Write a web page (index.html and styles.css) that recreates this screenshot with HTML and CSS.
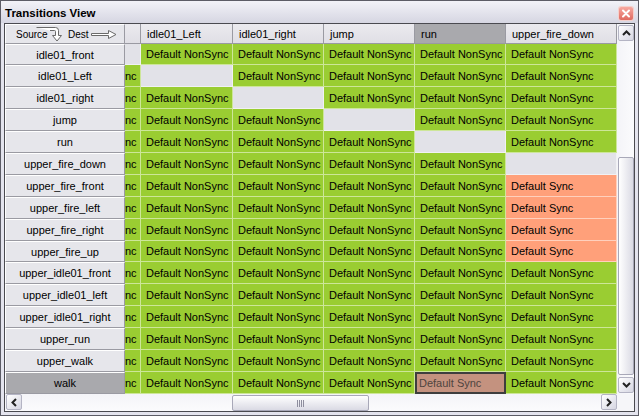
FILE: index.html
```html
<!DOCTYPE html>
<html>
<head>
<meta charset="utf-8">
<link rel="stylesheet" href="styles.css">
</head>
<body>
<div class="window">
  <div class="titlebar">
    <span class="title">Transitions View</span>
    <span class="close"><svg width="14" height="13" viewBox="0 0 14 13"><path d="M4 3.5 L10 9.5 M10 3.5 L4 9.5" stroke="#fff" stroke-width="2" stroke-linecap="round"/></svg></span>
  </div>
  <div class="frame">
    <div class="grid">
      <div class="corner">
        <span class="src">Source</span>
        <svg class="hook" width="27" height="16" viewBox="0 0 27 16"><path d="M0.5 1.5 H19.5 Q22.5 1.5 22.5 4.5 V9.5 H25.5 L21 15 L16.5 9.5 H19.5 V5.5 Q19.5 4.5 18.5 4.5 H14" fill="#fff" stroke="#6a6a6a" stroke-width="1"/></svg>
        <span class="dst">Dest</span>
        <svg class="rarrow" width="26" height="9" viewBox="0 0 26 9"><path d="M0.5 3.5 H17.5 V0.5 L25 4.5 L17.5 8.5 V5.5 H0.5 Z" fill="#fff" stroke="#6a6a6a" stroke-width="1"/></svg>
      </div>
      <div class="ch"></div>
      <div class="ch">idle01_Left</div>
      <div class="ch">idle01_right</div>
      <div class="ch">jump</div>
      <div class="ch sel">run</div>
      <div class="ch">upper_fire_down</div>

      <div class="rh">idle01_front</div>
      <div class="c e p"></div>
      <div class="c n">Default NonSync</div><div class="c n">Default NonSync</div><div class="c n">Default NonSync</div><div class="c n">Default NonSync</div><div class="c n">Default NonSync</div>

      <div class="rh">idle01_Left</div>
      <div class="c n p"><span>Default NonSync</span></div>
      <div class="c e"></div><div class="c n">Default NonSync</div><div class="c n">Default NonSync</div><div class="c n">Default NonSync</div><div class="c n">Default NonSync</div>

      <div class="rh">idle01_right</div>
      <div class="c n p"><span>Default NonSync</span></div>
      <div class="c n">Default NonSync</div><div class="c e"></div><div class="c n">Default NonSync</div><div class="c n">Default NonSync</div><div class="c n">Default NonSync</div>

      <div class="rh">jump</div>
      <div class="c n p"><span>Default NonSync</span></div>
      <div class="c n">Default NonSync</div><div class="c n">Default NonSync</div><div class="c e"></div><div class="c n">Default NonSync</div><div class="c n">Default NonSync</div>

      <div class="rh">run</div>
      <div class="c n p"><span>Default NonSync</span></div>
      <div class="c n">Default NonSync</div><div class="c n">Default NonSync</div><div class="c n">Default NonSync</div><div class="c e"></div><div class="c n">Default NonSync</div>

      <div class="rh">upper_fire_down</div>
      <div class="c n p"><span>Default NonSync</span></div>
      <div class="c n">Default NonSync</div><div class="c n">Default NonSync</div><div class="c n">Default NonSync</div><div class="c n">Default NonSync</div><div class="c e"></div>

      <div class="rh">upper_fire_front</div>
      <div class="c n p"><span>Default NonSync</span></div>
      <div class="c n">Default NonSync</div><div class="c n">Default NonSync</div><div class="c n">Default NonSync</div><div class="c n">Default NonSync</div><div class="c s">Default Sync</div>

      <div class="rh">upper_fire_left</div>
      <div class="c n p"><span>Default NonSync</span></div>
      <div class="c n">Default NonSync</div><div class="c n">Default NonSync</div><div class="c n">Default NonSync</div><div class="c n">Default NonSync</div><div class="c s">Default Sync</div>

      <div class="rh">upper_fire_right</div>
      <div class="c n p"><span>Default NonSync</span></div>
      <div class="c n">Default NonSync</div><div class="c n">Default NonSync</div><div class="c n">Default NonSync</div><div class="c n">Default NonSync</div><div class="c s">Default Sync</div>

      <div class="rh">upper_fire_up</div>
      <div class="c n p"><span>Default NonSync</span></div>
      <div class="c n">Default NonSync</div><div class="c n">Default NonSync</div><div class="c n">Default NonSync</div><div class="c n">Default NonSync</div><div class="c s">Default Sync</div>

      <div class="rh">upper_idle01_front</div>
      <div class="c n p"><span>Default NonSync</span></div>
      <div class="c n">Default NonSync</div><div class="c n">Default NonSync</div><div class="c n">Default NonSync</div><div class="c n">Default NonSync</div><div class="c n">Default NonSync</div>

      <div class="rh">upper_idle01_left</div>
      <div class="c n p"><span>Default NonSync</span></div>
      <div class="c n">Default NonSync</div><div class="c n">Default NonSync</div><div class="c n">Default NonSync</div><div class="c n">Default NonSync</div><div class="c n">Default NonSync</div>

      <div class="rh">upper_idle01_right</div>
      <div class="c n p"><span>Default NonSync</span></div>
      <div class="c n">Default NonSync</div><div class="c n">Default NonSync</div><div class="c n">Default NonSync</div><div class="c n">Default NonSync</div><div class="c n">Default NonSync</div>

      <div class="rh">upper_run</div>
      <div class="c n p"><span>Default NonSync</span></div>
      <div class="c n">Default NonSync</div><div class="c n">Default NonSync</div><div class="c n">Default NonSync</div><div class="c n">Default NonSync</div><div class="c n">Default NonSync</div>

      <div class="rh">upper_walk</div>
      <div class="c n p"><span>Default NonSync</span></div>
      <div class="c n">Default NonSync</div><div class="c n">Default NonSync</div><div class="c n">Default NonSync</div><div class="c n">Default NonSync</div><div class="c n">Default NonSync</div>

      <div class="rh sel">walk</div>
      <div class="c n p"><span>Default NonSync</span></div>
      <div class="c n">Default NonSync</div><div class="c n">Default NonSync</div><div class="c n">Default NonSync</div><div class="c x">Default Sync</div><div class="c n">Default NonSync</div>
    </div>

    <div class="vscroll">
      <div class="sbtn"><svg width="9" height="6" viewBox="0 0 9 6"><path d="M1 5 L4.5 1.5 L8 5" fill="none" stroke="#222" stroke-width="2"/></svg></div>
      <div class="vthumb"></div>
      <div class="sbtn"><svg width="9" height="6" viewBox="0 0 9 6"><path d="M1 1 L4.5 4.5 L8 1" fill="none" stroke="#222" stroke-width="2"/></svg></div>
    </div>

    <div class="hscroll">
      <div class="sbtn"><svg width="6" height="9" viewBox="0 0 6 9"><path d="M5 1 L1.5 4.5 L5 8" fill="none" stroke="#222" stroke-width="2"/></svg></div>
      <div class="hthumb"><span class="grip"></span></div>
      <div class="sbtn right"><svg width="6" height="9" viewBox="0 0 6 9"><path d="M1 1 L4.5 4.5 L1 8" fill="none" stroke="#222" stroke-width="2"/></svg></div>
    </div>
    <div class="sizebox"></div>
  </div>
</div>
</body>
</html>
```

FILE: styles.css
```css
html, body {
  margin: 0;
  padding: 0;
  background: #ffffff;
}

.window {
  width: 639px;
  height: 416px;
  box-sizing: border-box;
  border: 1px solid #5c5c66;
  background: #e4e4ee;
  padding: 0 3px 3px 3px;
  display: flex;
  flex-direction: column;
  font-family: "Liberation Sans", Arial, sans-serif;
  font-size: 11px;
  color: #000;
}

.titlebar {
  height: 22px;
  margin: 0 -3px;
  padding: 0 5px 0 4px;
  display: flex;
  align-items: center;
  justify-content: space-between;
  background: linear-gradient(#f2f2f8, #d6d6e2);
}

.title {
  font-weight: bold;
  font-size: 11.5px;
  color: #000;
  padding-top: 1px;
}

.close {
  width: 14px;
  height: 13px;
  margin-top: 2px;
  box-sizing: border-box;
  border-radius: 2px;
  background: linear-gradient(#f7a8a0, #e06a60);
  box-shadow: 0 0 0 1px #f4d0cc;
  display: flex;
}

.frame {
  flex: 1;
  border: 1px solid #4a4a50;
  display: grid;
  grid-template-columns: 612px 17px;
  grid-template-rows: 370px 17px;
  background: #ffffff;
}

.grid {
  display: grid;
  grid-template-columns: 120px 16px 92px 91px 91px 91px 111px;
  grid-template-rows: 20px 21px repeat(8, 22px) 21px repeat(6, 22px);
  overflow: hidden;
}

.corner, .rh {
  box-sizing: border-box;
  background: #e6e6eb;
  border-top: 1px solid #ffffff;
  border-left: 1px solid #ffffff;
  border-right: 1px solid #9a9aa2;
  border-bottom: 1px solid #9a9aa2;
  display: flex;
  align-items: center;
}

.rh {
  justify-content: center;
  white-space: nowrap;
}

.rh.sel {
  background: #a9a9ad;
}

.corner {
  padding-left: 10px;
  font-size: 10px;
}

.src {
  width: 34px;
}

.hook {
  margin-left: -14px;
  align-self: flex-start;
  margin-top: 1px;
  flex: none;
}

.dst {
  margin-left: 5px;
}

.rarrow {
  margin-left: 2px;
  flex: none;
}

.ch {
  box-sizing: border-box;
  background: linear-gradient(#ebeaef, #e0dfe5);
  border-right: 1px solid #9a9aa2;
  border-bottom: 1px solid #9a9aa2;
  padding-left: 6px;
  display: flex;
  align-items: center;
  white-space: nowrap;
  overflow: hidden;
}

.ch.sel {
  background: #a9a9ad;
}

.c {
  box-sizing: border-box;
  border-right: 1px solid rgba(255, 255, 255, 0.5);
  border-bottom: 1px solid rgba(255, 255, 255, 0.5);
  padding-left: 5px;
  display: flex;
  align-items: center;
  white-space: nowrap;
  overflow: hidden;
}

.n { background: #9acd32; }
.s { background: #ffa07a; }
.e { background: #e2e2e8; }

.x {
  background: #c4927f;
  border: 2px solid #3e3e3e;
  padding-left: 2px;
  color: #4e4440;
}

.p {
  padding-left: 0;
  justify-content: flex-end;
}

.p span {
  flex: none;
  width: 91px;
  padding-left: 5px;
  box-sizing: border-box;
}

.vscroll {
  background: linear-gradient(to right, #f4f4f8, #fbfbfd);
  display: flex;
  flex-direction: column;
  padding: 1px 0;
  box-sizing: border-box;
}

.hscroll {
  background: linear-gradient(#f4f4f8, #fbfbfd);
  display: flex;
}

.sbtn {
  width: 16px;
  height: 16px;
  box-sizing: border-box;
  border: 1px solid #b4b4c4;
  border-radius: 2px;
  background: linear-gradient(135deg, #ffffff, #d6d6e2);
  display: flex;
  align-items: center;
  justify-content: center;
  flex: none;
  margin-left: 1px;
}

.sbtn.right {
  margin-left: auto;
}

.vthumb {
  margin-top: auto;
  margin-bottom: 2px;
  margin-left: 1px;
  width: 16px;
  height: 218px;
  box-sizing: border-box;
  border: 1px solid #a8a8b8;
  border-radius: 2px;
  background: linear-gradient(to right, #ffffff, #dadae4);
}

.hthumb {
  margin-left: 210px;
  margin-top: 1px;
  width: 137px;
  height: 16px;
  box-sizing: border-box;
  border: 1px solid #a8a8b8;
  border-radius: 2px;
  background: linear-gradient(#ffffff, #dadae4);
  display: flex;
  align-items: center;
  justify-content: center;
}

.grip {
  width: 7px;
  height: 7px;
  background: repeating-linear-gradient(to right, #8e8e9e 0 1px, transparent 1px 2px);
}

.sizebox {
  background: #f6f6f9;
}
```
